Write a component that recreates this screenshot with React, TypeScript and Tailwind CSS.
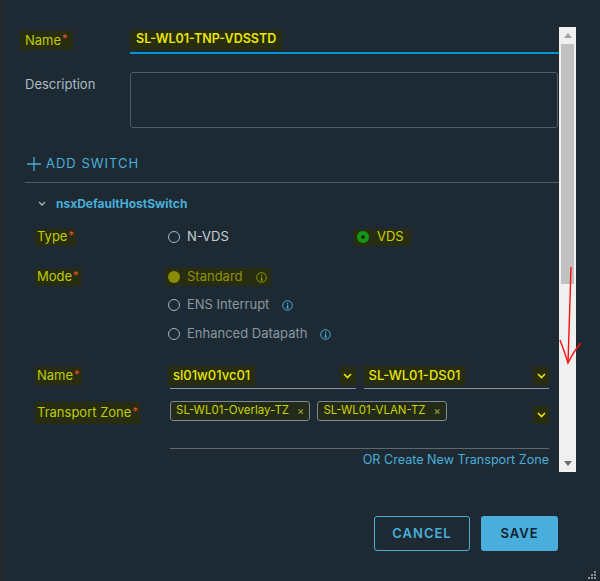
import React from 'react';

const Hl = ({ children, className = '' }: { children: React.ReactNode; className?: string }) => (
  <span className={`inline-flex items-center bg-[#282d12] ${className}`}>{children}</span>
);

const Req = () => <span className="text-[#e8502a] text-[11px] ml-[1px] -translate-y-[2px]">*</span>;

const Info = ({ color = '#49afd9' }: { color?: string }) => (
  <svg width="11" height="11" viewBox="0 0 11 11" className="ml-[6px]">
    <circle cx="5.5" cy="5.5" r="4.8" fill="none" stroke={color} strokeWidth="1" />
    <rect x="5" y="2.6" width="1.2" height="1.2" fill={color} />
    <rect x="5" y="4.6" width="1.2" height="3.6" fill={color} />
    <rect x="4.2" y="7.6" width="2.8" height="0.9" fill={color} />
  </svg>
);

const Radio = ({ kind }: { kind: 'off' | 'green' | 'olive' }) => {
  if (kind === 'green')
    return (
      <span className="w-[12px] h-[12px] rounded-full bg-[#0f9a12] flex items-center justify-center">
        <span className="w-[4px] h-[4px] rounded-full bg-[#1d2a1a]" />
      </span>
    );
  if (kind === 'olive') return <span className="w-[12px] h-[12px] rounded-full bg-[#8b8c06]" />;
  return <span className="w-[12px] h-[12px] rounded-full border border-[#a9b5be]" />;
};

const Chevron = () => (
  <Hl className="w-[16px] h-[18px] justify-center">
    <svg width="9" height="6" viewBox="0 0 9 6">
      <path d="M1 1 L4.5 4.5 L8 1" fill="none" stroke="#e6e600" strokeWidth="1.6" />
    </svg>
  </Hl>
);

const Chip = ({ text }: { text: string }) => (
  <span className="h-[20px] flex items-center border border-[#7d8a93] rounded-[3px] pl-[5px] pr-[5px] text-[11.5px] text-[#c8d200] bg-[#232a18]">
    {text}
    <span className="ml-[8px] text-[#a2ad4a] text-[11px]">×</span>
  </span>
);

export default function App() {
  return (
    <div className="w-[600px] h-[581px] bg-[#1d2a33] relative overflow-hidden border-l border-[#2a2a2a] text-[13px] text-[#adbbc4] font-['Inter','Noto_Sans',sans-serif]">
      <div className="flex h-[445px] mt-[27px] pr-[24px]">
        <div className="flex-1 min-w-0">
          {/* top name */}
          <div className="flex h-[27px] items-center">
            <div className="w-[129px] pl-[19px]">
              <Hl className="px-[5px] h-[19px] text-[#bfcc00]">
                Name<Req />
              </Hl>
            </div>
            <div className="flex-1 h-[27px] border-b-2 border-[#0095d3] flex items-center">
              <Hl className="px-[6px] h-[20px] font-semibold text-[#e6e600] text-[12.5px]">SL-WL01-TNP-VDSSTD</Hl>
            </div>
          </div>

          {/* description */}
          <div className="flex mt-[18px]">
            <div className="w-[129px] pl-[24px] pt-[4px] leading-[16px]">Description</div>
            <div className="flex-1 h-[56px] mr-[1px] border border-[#4f5b66] rounded-[3px]" />
          </div>

          {/* add switch */}
          <div className="flex items-center h-[20px] mt-[26px] pl-[26px] text-[#49afd9] tracking-[1px]">
            <svg width="14" height="14" viewBox="0 0 14 14">
              <path d="M7 0 V14 M0 7 H14" stroke="#49afd9" strokeWidth="1.3" />
            </svg>
            <span className="ml-[5px] text-[13px]">ADD SWITCH</span>
          </div>

          <div className="mt-[8px] ml-[24px] border-t border-[#4e5a64]" />

          {/* switch header */}
          <div className="flex items-center h-[20px] mt-[11px] pl-[37px]">
            <svg width="8" height="6" viewBox="0 0 8 6">
              <path d="M1 1 L4 4 L7 1" fill="none" stroke="#a9b5be" strokeWidth="1.3" />
            </svg>
            <span className="ml-[10px] text-[12px] font-bold text-[#49afd9]">nsxDefaultHostSwitch</span>
          </div>

          {/* type */}
          <div className="flex items-center h-[20px] mt-[13px]">
            <div className="w-[167px] pl-[34px]">
              <Hl className="px-[2px] h-[17px] text-[#bfcc00]">
                Type<Req />
              </Hl>
            </div>
            <div className="w-[186px] flex items-center gap-[7px] text-[#c5d0d6]">
              <Radio kind="off" />
              N-VDS
            </div>
            <Hl className="pl-[3px] pr-[7px] h-[17px] gap-[8px] text-[#c8d200]">
              <Radio kind="green" />
              VDS
            </Hl>
          </div>

          {/* mode */}
          <div className="flex mt-[20px]">
            <div className="w-[167px] pl-[34px] h-[20px] flex items-center">
              <Hl className="px-[2px] h-[17px] text-[#bfcc00]">
                Mode<Req />
              </Hl>
            </div>
            <div className="flex flex-col">
              <div className="h-[20px] flex items-center -ml-[3px]">
                <Hl className="pl-[3px] pr-[4px] h-[18px] gap-[7px] text-[#8e9100]">
                  <Radio kind="olive" />
                  Standard
                  <Info color="#8e9c00" />
                </Hl>
              </div>
              <div className="h-[20px] mt-[8px] flex items-center gap-[7px] text-[#8a98a3]">
                <Radio kind="off" />
                ENS Interrupt
                <Info />
              </div>
              <div className="h-[20px] mt-[9px] flex items-center gap-[7px] text-[#8a98a3]">
                <Radio kind="off" />
                Enhanced Datapath
                <Info />
              </div>
            </div>
          </div>

          {/* switch name */}
          <div className="flex items-center h-[26px] mt-[19px] pr-[10px]">
            <div className="w-[169px] pl-[34px]">
              <Hl className="px-[2px] h-[18px] text-[#bfcc00]">
                Name<Req />
              </Hl>
            </div>
            <div className="flex-1 h-[26px] border-b border-[#8c969d] flex items-center justify-between">
              <Hl className="px-[5px] h-[20px] -ml-[2px] font-medium text-[#e6e600]">sl01w01vc01</Hl>
              <Chevron />
            </div>
            <div className="w-[8px]" />
            <div className="flex-1 h-[26px] border-b border-[#8c969d] flex items-center justify-between">
              <Hl className="px-[5px] h-[20px] font-medium text-[#e6e600]">SL-WL01-DS01</Hl>
              <Chevron />
            </div>
          </div>

          {/* transport zone */}
          <div className="flex mt-[9px] pr-[10px]">
            <div className="w-[169px] pl-[34px] pt-[4px]">
              <Hl className="px-[2px] h-[22px] text-[#bfcc00]">
                Transport Zone<Req />
              </Hl>
            </div>
            <div className="flex-1 h-[51px] border-b border-[#5d6870] flex items-start pt-[3px]">
              <div className="flex gap-[7px]">
                <Chip text="SL-WL01-Overlay-TZ" />
                <Chip text="SL-WL01-VLAN-TZ" />
              </div>
              <div className="ml-auto mt-[3px]">
                <Chevron />
              </div>
            </div>
          </div>

          <div className="flex justify-end pr-[10px] mt-[3px] h-[16px] items-center text-[12.6px] text-[#49afd9]">
            OR Create New Transport Zone
          </div>
        </div>

        {/* scrollbar */}
        <div className="w-[17px] bg-[#f0f0f0] flex flex-col items-center">
          <div className="h-[17px] flex items-center justify-center">
            <svg width="8" height="5" viewBox="0 0 8 5">
              <path d="M0 5 L4 0 L8 5 Z" fill="#a3a3a3" />
            </svg>
          </div>
          <div className="w-[13px] h-[240px] bg-[#c1c1c1]" />
          <div className="flex-1" />
          <div className="h-[17px] flex items-center justify-center">
            <svg width="8" height="5" viewBox="0 0 8 5">
              <path d="M0 0 L8 0 L4 5 Z" fill="#6b6b6b" />
            </svg>
          </div>
        </div>
      </div>

      {/* footer */}
      <div className="flex justify-end gap-[11px] pr-[42px] mt-[44px]">
        <button className="w-[96px] h-[35px] border border-[#49afd9] rounded-[3px] text-[#49afd9] text-[13px] font-semibold tracking-[1px]">
          CANCEL
        </button>
        <button className="w-[77px] h-[35px] bg-[#49aedb] rounded-[3px] text-[#10202a] text-[13px] font-semibold tracking-[1px]">
          SAVE
        </button>
      </div>

      {/* annotation arrow */}
      <svg className="absolute left-0 top-0 pointer-events-none" width="600" height="581">
        <path d="M570 267 C569 300 568 335 567 363" fill="none" stroke="#ff1010" strokeWidth="1.4" />
        <path d="M559 340 C562 348 565 356 567 363 C571 355 575 348 580 343" fill="none" stroke="#ff1010" strokeWidth="1.4" />
      </svg>

      {/* resize grip */}
      <svg className="absolute right-[3px] bottom-[1px]" width="10" height="10" viewBox="0 0 10 10">
        <rect x="7" y="1" width="2" height="2" fill="#8a949b" />
        <rect x="4" y="4" width="2" height="2" fill="#8a949b" />
        <rect x="7" y="4" width="2" height="2" fill="#8a949b" />
        <rect x="1" y="7" width="2" height="2" fill="#8a949b" />
        <rect x="4" y="7" width="2" height="2" fill="#8a949b" />
        <rect x="7" y="7" width="2" height="2" fill="#8a949b" />
      </svg>
    </div>
  );
}
